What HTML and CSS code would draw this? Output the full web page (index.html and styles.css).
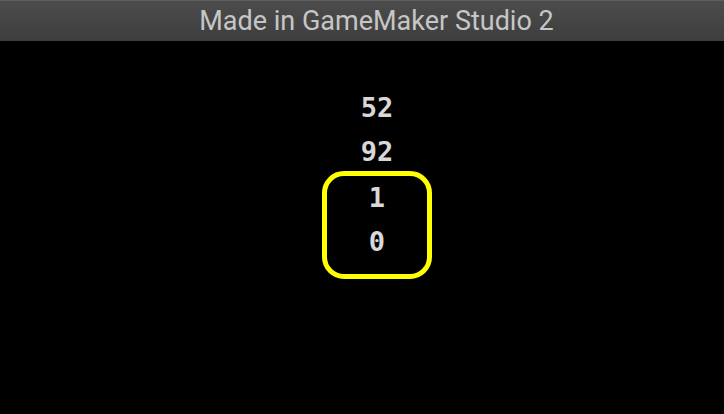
FILE: index.html
```html
<!DOCTYPE html>
<html>
<head>
<meta charset="utf-8">
<link rel="stylesheet" href="styles.css">
</head>
<body>
<div class="titlebar">Made in GameMaker Studio 2</div>
<main class="stage">
  <div class="stack">
    <div class="num">52</div>
    <div class="num">92</div>
    <div class="box">
      <div class="num">1</div>
      <div class="num">0</div>
    </div>
  </div>
</main>
</body>
</html>
```
FILE: styles.css
```css
html, body {
  margin: 0;
  padding: 0;
  background: #000;
  width: 724px;
  height: 414px;
  overflow: hidden;
}
.titlebar {
  height: 41px;
  box-sizing: border-box;
  border-top: 1px solid #5e5e5e;
  background: linear-gradient(#4c4c4c, #3e3e3e);
  color: #c6c6c6;
  font-family: Roboto, "Liberation Sans", sans-serif;
  font-size: 27px;
  line-height: 40px;
  text-align: center;
  padding-left: 29px;
}
.stage {
  display: flex;
  justify-content: center;
  padding-top: 45px;
  padding-left: 30px;
}
.stack {
  display: flex;
  flex-direction: column;
  align-items: center;
}
.num {
  font-family: "DejaVu Sans Mono", monospace;
  font-weight: bold;
  font-size: 27px;
  line-height: 44px;
  height: 44px;
  color: #d8d8d8;
  text-align: center;
}
.box {
  margin-top: -3px;
  width: 110px;
  box-sizing: border-box;
  border: 5px solid #ffff00;
  border-radius: 22px;
  padding-bottom: 10px;
  display: flex;
  flex-direction: column;
  align-items: center;
}
```
